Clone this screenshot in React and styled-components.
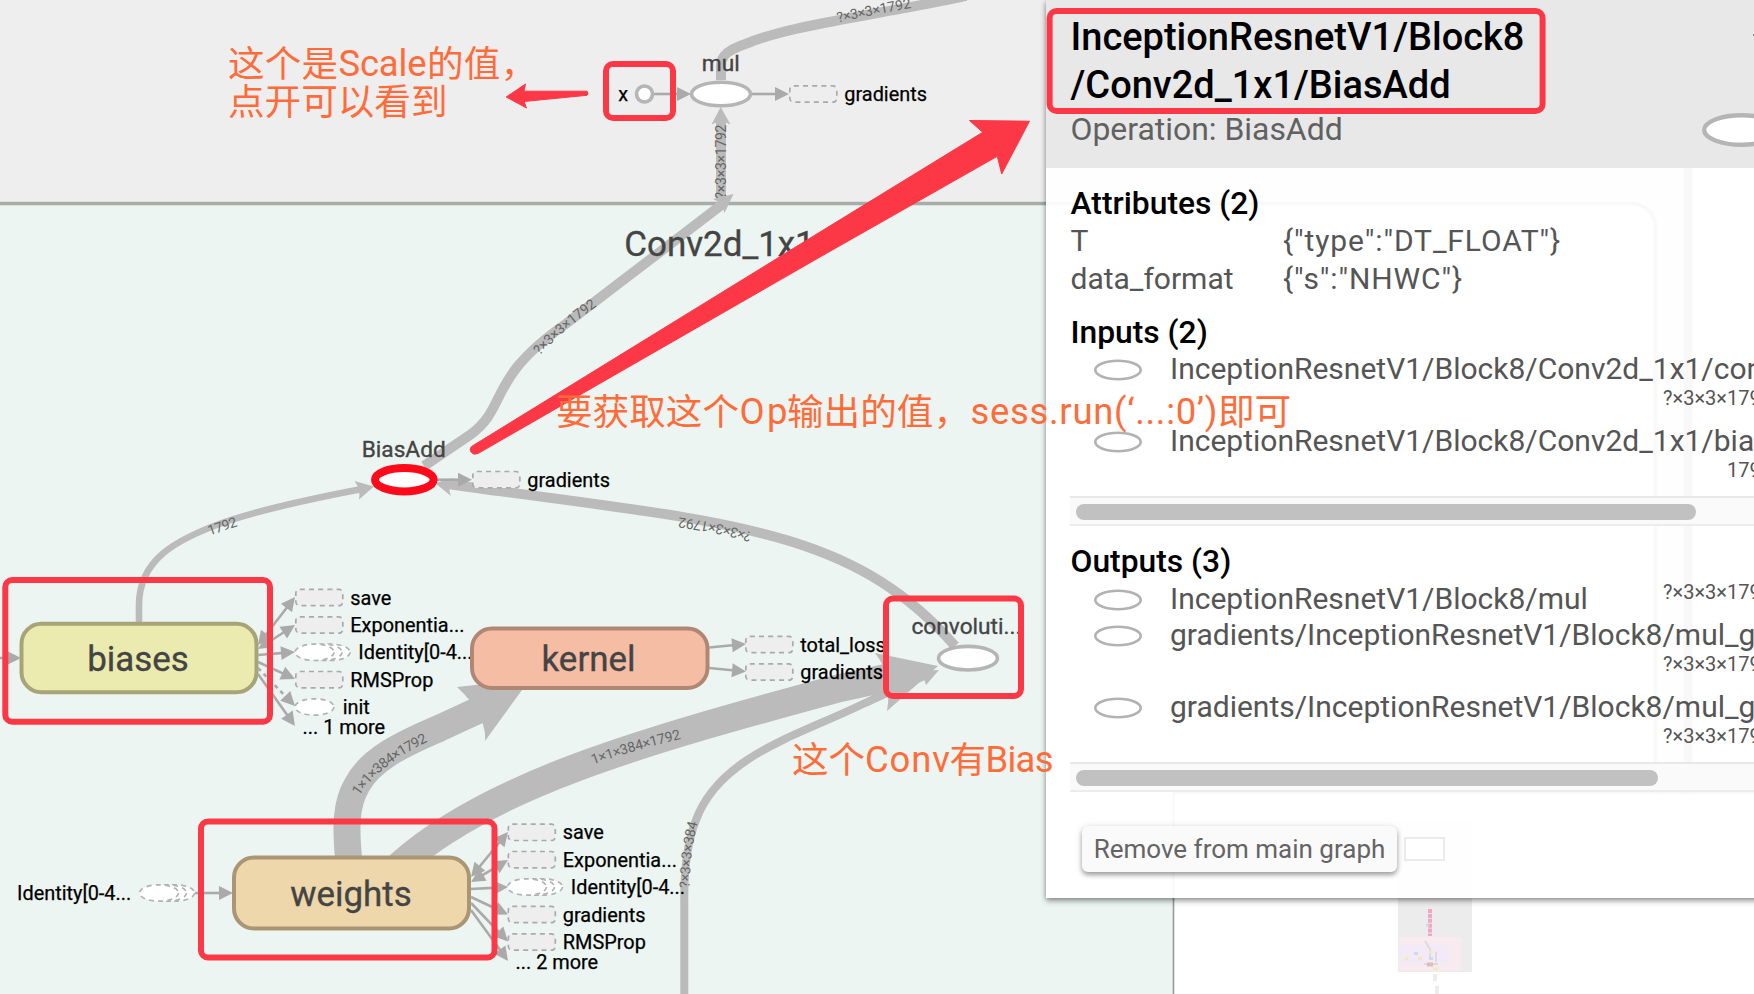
import React from "react";
import styled, { createGlobalStyle } from "styled-components";

const GlobalStyle = createGlobalStyle`
  html, body { margin: 0; padding: 0; overflow: hidden; background: #fff; }
  * { box-sizing: border-box; }
`;

const Page = styled.main`
  display: grid;
  grid-template-columns: 1754px;
  grid-template-rows: 994px;
  width: 1754px;
  height: 994px;
  overflow: hidden;
  font-family: Roboto, "Noto Sans CJK SC", sans-serif;
`;

const Canvas = styled.svg`
  grid-area: 1 / 1;
  display: block;
  width: 1754px;
  height: 994px;
  pointer-events: none;
`;

/* ---------- graph parts ---------- */

const Edge = styled.path`
  fill: none;
  stroke: #bbb;
  stroke-width: ${(p) => p.$w}px;
  stroke-linecap: ${(p) => p.$cap || "butt"};
`;
const EdgeHead = styled.path`
  fill: #bbb;
`;
const Wire = styled.line`
  stroke: #aaa;
  stroke-width: 2.6px;
  stroke-dasharray: ${(p) => (p.$dotted ? "4 4" : "none")};
`;
const WireHead = styled.path`
  fill: #aaa;
`;
const OpNode = styled.ellipse`
  fill: #fff;
  stroke: ${(p) => p.$color || "#b5b5b5"};
  stroke-width: ${(p) => p.$w || 3.6}px;
`;
const VariableNode = styled.rect`
  fill: ${(p) => p.$fill};
  stroke: ${(p) => p.$stroke};
  stroke-width: 4px;
`;
const DashedBox = styled.rect`
  fill: ${(p) => p.$fill || "#eee"};
  stroke: #aaa;
  stroke-width: 1.7px;
  stroke-dasharray: 5 4.2;
`;
const DashedOval = styled.ellipse`
  fill: #fff;
  stroke: #b2b2b2;
  stroke-width: 1.7px;
  stroke-dasharray: 5 4.2;
`;
const NodeLabel = styled.text`
  font-size: ${(p) => p.$size || 22.7}px;
  fill: #444;
  stroke: #444;
  stroke-width: 0.35px;
  text-anchor: middle;
`;
const SideLabel = styled.text`
  font-size: 19.9px;
  fill: #000;
  stroke: #000;
  stroke-width: 0.25px;
`;
const ShapeLabel = styled.text`
  font-size: 14px;
  fill: #666;
`;
const Frame = styled.rect`
  fill: none;
  stroke: #fd3846;
  stroke-width: 6px;
`;
const RedArrow = styled.path`
  fill: #fd3846;
  stroke: #fd3846;
  stroke-width: 1px;
  stroke-linejoin: round;
`;
const Note = styled.text`
  fill: #ff6c3a;
  font-family: ${(p) => (p.$cjk ? '"Noto Sans CJK SC"' : "Roboto")}, sans-serif;
  font-size: ${(p) => (p.$cjk ? 36.6 : 36.4)}px;
  font-weight: 400;
`;

function PathLabel({ id, d, length, children }) {
  return (
    <>
      <path id={id} d={d} fill="none" />
      <ShapeLabel>
        <textPath href={`#${id}`} textLength={length}>
          {children}
        </textPath>
      </ShapeLabel>
    </>
  );
}

function Arrow({ from, to, both, dotted }) {
  const [x1, y1] = from;
  const [x2, y2] = to;
  const angle = (Math.atan2(y2 - y1, x2 - x1) * 180) / Math.PI;
  const len = Math.hypot(x2 - x1, y2 - y1);
  const k = (len - 11) / len;
  const s = both ? 11 / len : 0;
  return (
    <g>
      <Wire
        $dotted={dotted}
        x1={x1 + (x2 - x1) * s}
        y1={y1 + (y2 - y1) * s}
        x2={x1 + (x2 - x1) * k}
        y2={y1 + (y2 - y1) * k}
      />
      <WireHead d="M0 0L-14 -7V7Z" transform={`translate(${x2} ${y2}) rotate(${angle})`} />
      {both && (
        <WireHead d="M0 0L-14 -7V7Z" transform={`translate(${x1} ${y1}) rotate(${angle + 180})`} />
      )}
    </g>
  );
}

function Stack({ x, y }) {
  return (
    <g>
      {[16, 8, 0].map((o) => (
        <DashedOval key={o} cx={x + 19.5 + o} cy={y} rx="19.5" ry="8.2" />
      ))}
    </g>
  );
}

function SideNode({ x, y, kind = "box", fill, label }) {
  const labelX = x + { box: 55.3, stack: 63.3, oval: 47.7 }[kind];
  return (
    <g>
      {kind === "box" && <DashedBox $fill={fill} x={x + 0.8} y={y - 8.2} width="47" height="16.4" rx="4" />}
      {kind === "stack" && <Stack x={x} y={y} />}
      {kind === "oval" && <DashedOval cx={x + 19.5} cy={y} rx="19.5" ry="8.2" />}
      <SideLabel x={labelX} y={y + 7}>{label}</SideLabel>
    </g>
  );
}

function Minimap() {
  return (
    <g>
      <rect x="1173.5" y="793" width="600" height="220" fill="#fff" stroke="#999" strokeWidth="1.6" />
      <rect x="1398" y="820" width="74" height="152" fill="#ececec" />
      <rect x="1399" y="937" width="62" height="34" fill="#f7ebf0" />
      <rect x="1400" y="945" width="49" height="19" fill="#f2eaf7" />
      <rect x="1405" y="838" width="39" height="22" fill="#fff" stroke="#000" strokeWidth="2" />
      <path d="M1430 909V936" stroke="#f3a6c4" strokeWidth="4" strokeDasharray="4 .9" />
      <path d="M1430 898v10M1435 974v7M1437 986v8" stroke="#ececec" strokeWidth="4" />
      <path d="M1425 941l5 8v11M1436 952v10M1424 964h14" stroke="#dedadb" strokeWidth="2" fill="none" />
      <path d="M1404.5 958.5h4M1418 958.5h4M1429 952h4M1433 969h5" stroke="#f3e8c2" strokeWidth="3" />
      <path d="M1414 953.5h4M1429 958.5h4M1426 925h3" stroke="#d0d9ec" strokeWidth="3" />
      <path d="M1427 964.5h6" stroke="#dfbcb4" strokeWidth="4" />
    </g>
  );
}

function Graph() {
  return (
    <Canvas viewBox="0 0 1754 994">
      <rect width="1754" height="994" fill="#eee" />
      <path d="M1688 0V994" stroke="#a9a9a9" strokeWidth="9" />
      <rect x="1693" width="61" height="994" fill="#f7f7f7" />
      <rect x="-40" y="203.5" width="1695.5" height="900" rx="24" fill="#ecf5f1" stroke="#a7ada9" strokeWidth="3.6" />
      <Minimap />

      <Edge $w={10} d="M721 80V66C721 55 728 50 748 43C780 30 830 22 880 12.5C910 7 940 2 966 -4" />
      <Edge $w={10} d="M721 199V120" />
      <EdgeHead d="M720.7 107L730.5 124.5Q721 119 711.5 124.5Z" />
      <Edge $w={10} d="M424 466L470 435C510 405 485 380 567 323L724 203" />
      <EdgeHead d="M733.5 194L724.5 213Q723 203 713 199Z" />
      <Edge $w={6.6} d="M139 622V605C139 560 175 540 222 523C262 509 320 497 362 489" />
      <EdgeHead d="M374 486.5L359 499.5Q361 490 354.5 481Z" />
      <Edge $w={10} d="M955 646C850 525 720 522 447 484" />
      <EdgeHead d="M435 483L451 496Q447 487 453 478Z" />
      <Edge $w={8} d="M684.3 994V900C684 860 690 835 696 820C720 755 800 735 865 703L926 675" />
      <EdgeHead d="M939 670L926 685Q924 676 915 671Z" />
      <Edge $w={27} d="M348.5 858C346 830 345 805 357 785C370 760 400 745 440 728L482 708.5" />
      <EdgeHead d="M530 679L485 741Q487 715 457 687Z" />
      <Edge $w={28} $cap="round" d="M401 864C490 785 640 742 840 688L895 676" />
      <EdgeHead d="M938 666L887 711Q893 675 875 653Z" />

      <PathLabel id="shape-out" length={75} d="M838 22.5Q875 14 914 7.5">?×3×3×1792</PathLabel>
      <PathLabel id="shape-mul" length={74} d="M726 198.5V122">?×3×3×1792</PathLabel>
      <PathLabel id="shape-bias" length={76} d="M539.5 355.5Q563 330 597 306">?×3×3×1792</PathLabel>
      <PathLabel id="shape-conv" length={75} d="M752 532.5Q717 522 675 517">?×3×3×1792</PathLabel>
      <PathLabel id="shape-biases" length={30} d="M209.5 535.5L241 525">1792</PathLabel>
      <PathLabel id="shape-kernel" length={89} d="M359 796Q381 763 431 740">1×1×384×1792</PathLabel>
      <PathLabel id="shape-weights" length={92} d="M593 764.5Q637 749 685 738">1×1×384×1792</PathLabel>
      <PathLabel id="shape-input" length={66} d="M689.5 888Q690 850 699 818">?×3×3×384</PathLabel>

      <Arrow from={[653, 94]} to={[691, 94]} />
      <OpNode cx="644.5" cy="94" rx="8" ry="8" />
      <Arrow from={[752, 94]} to={[789, 94]} />
      <OpNode cx="721" cy="94" rx="29.5" ry="11.8" />
      <SideNode x={789} y={94} fill="none" label="gradients" />
      <SideLabel x="618.3" y="101">x</SideLabel>
      <NodeLabel x="720.7" y="70.7">mul</NodeLabel>

      <NodeLabel $size={34.9} x="719.5" y="255.7">Conv2d_1x1</NodeLabel>

      <Arrow from={[437, 479.7]} to={[472, 479.7]} />
      <OpNode $color="#ff0a1a" $w={8} cx="404.3" cy="479.7" rx="29.3" ry="11.7" />
      <NodeLabel x="403.7" y="456.5">BiasAdd</NodeLabel>
      <SideNode x={472} y={479.7} label="gradients" />

      <Arrow from={[-6, 658]} to={[21, 658]} />
      <VariableNode $fill="#ebeaaf" $stroke="#a7a477" x="21.5" y="623.7" width="235" height="68.6" rx="20" />
      <NodeLabel $size={34.9} x="138" y="670.7">biases</NodeLabel>
      <Arrow from={[258, 645]} to={[295, 597]} both />
      <Arrow from={[258, 649]} to={[295, 625]} both />
      <Arrow from={[258, 655]} to={[295, 652]} />
      <Arrow from={[258, 662]} to={[295, 679]} />
      <Arrow from={[258, 668]} to={[295, 706]} dotted />
      <Arrow from={[258, 674]} to={[295, 726]} />
      <SideNode x={295} y={597.5} label="save" />
      <SideNode x={295} y={625} label="Exponentia..." />
      <SideNode x={295} y={652.3} kind="stack" label="Identity[0-4..." />
      <SideNode x={295} y={679.7} label="RMSProp" />
      <SideNode x={295} y={707} kind="oval" label="init" />
      <SideLabel x="302.5" y="733.5">... 1 more</SideLabel>

      <VariableNode $fill="#f5bda4" $stroke="#b08774" x="472" y="628.5" width="235.5" height="59.5" rx="20" />
      <NodeLabel $size={34.9} x="588.5" y="670.7">kernel</NodeLabel>
      <Arrow from={[709, 647.5]} to={[746, 644]} />
      <Arrow from={[709, 668]} to={[746, 671.5]} />
      <SideNode x={745} y={644.5} label="total_loss" />
      <SideNode x={745} y={672} label="gradients" />

      <OpNode cx="968" cy="658.2" rx="29.5" ry="11.8" />
      <NodeLabel x="966.5" y="634.3">convoluti...</NodeLabel>

      <SideLabel x="17" y="900">Identity[0-4...</SideLabel>
      <Stack x={139.5} y={893} />
      <Arrow from={[195, 893]} to={[233, 893]} />
      <VariableNode $fill="#eed7ab" $stroke="#aa9675" x="234" y="857.5" width="235" height="71" rx="20" />
      <NodeLabel $size={34.9} x="351" y="905.7">weights</NodeLabel>
      <Arrow from={[471, 877]} to={[508, 832]} both />
      <Arrow from={[471, 882]} to={[508, 860]} both />
      <Arrow from={[471, 889]} to={[508, 887]} />
      <Arrow from={[471, 897]} to={[508, 914.5]} />
      <Arrow from={[471, 903]} to={[508, 941.5]} />
      <Arrow from={[471, 910]} to={[508, 961]} />
      <SideNode x={507.5} y={832.3} label="save" />
      <SideNode x={507.5} y={859.7} label="Exponentia..." />
      <SideNode x={507.5} y={887} kind="stack" label="Identity[0-4..." />
      <SideNode x={507.5} y={914.5} label="gradients" />
      <SideNode x={507.5} y={942} label="RMSProp" />
      <SideLabel x="515.5" y="968.5">... 2 more</SideLabel>
    </Canvas>
  );
}

/* ---------- info panel ---------- */

const Panel = styled.aside`
  grid-area: 1 / 1;
  justify-self: start;
  align-self: start;
  margin-left: 1046px;
  width: 750px;
  height: 898px;
  display: flex;
  flex-direction: column;
  background: rgba(255, 255, 255, 0.92);
  box-shadow: 0 3px 6px rgba(0, 0, 0, 0.34), 0 1px 4px rgba(0, 0, 0, 0.2);
`;
const PanelHeader = styled.header`
  height: 168px;
  padding: 13px 0 0 24.5px;
  background: #e8e8e8;
  display: grid;
  grid-template-columns: 631px 80px;
  grid-template-rows: 96px 42px;
`;
const Title = styled.h1`
  margin: 0;
  font-size: 38px;
  font-weight: 500;
  line-height: 48px;
  color: #000;
`;
const Subtitle = styled.div`
  font-size: 31.9px;
  line-height: 41px;
  color: #616161;
`;
const HeaderIcon = styled.svg`
  width: 80px;
  height: 34px;
  margin-top: 4px;
  display: block;
`;
const CollapseIcon = styled.svg`
  width: 24px;
  height: 14px;
  margin: 18px 0 0 50px;
  display: block;
`;
const PanelBody = styled.div`
  padding: 17px 0 0 24.5px;
  display: flex;
  flex-direction: column;
`;
const SectionTitle = styled.h2`
  margin: ${(p) => p.$top || 0}px 0 0;
  font-size: 31.8px;
  font-weight: 500;
  line-height: 37px;
  color: #000;
`;
const AttributeRow = styled.div`
  display: grid;
  grid-template-columns: 212.5px 1fr;
  font-size: 30px;
  line-height: 37.5px;
  color: #555;
`;
const AttributeValue = styled.span`
  letter-spacing: 0.9px;
`;
const OpList = styled.div`
  height: ${(p) => p.$height}px;
  padding-top: ${(p) => p.$top}px;
`;
const OpRow = styled.div`
  display: grid;
  grid-template-columns: 99.5px 602px;
`;
const OpIcon = styled.svg`
  width: 50px;
  height: 24px;
  margin: 6.5px 0 0 22.3px;
  display: block;
`;
const OpText = styled.div`
  display: flex;
  flex-wrap: wrap;
  justify-content: space-between;
  align-items: flex-start;
  color: #555;
`;
const OpName = styled.span`
  font-size: 30px;
  line-height: 36px;
  white-space: nowrap;
`;
const OpShape = styled.span`
  margin-left: auto;
  min-height: 36px;
  font-size: 20px;
  line-height: 23px;
`;
const ScrollTrack = styled.div`
  height: 30px;
  margin-left: -1px;
  padding: 6px 0 0 6px;
  background: #fafafa;
  border-top: 2px solid #e8e8e8;
  border-bottom: 2px solid #ececec;
`;
const ScrollThumb = styled.div`
  width: ${(p) => p.$width}px;
  height: 16px;
  border-radius: 8px;
  background: #c1c1c1;
`;
const RemoveButton = styled.button`
  align-self: flex-start;
  margin: 34px 0 0 11.5px;
  width: 315px;
  height: 46px;
  padding: 0;
  border: 0;
  border-radius: 6px;
  background: #fafafa;
  box-shadow: 0 3px 5px rgba(0, 0, 0, 0.36), 0 0 8px rgba(0, 0, 0, 0.08);
  font: 400 26px/46px Roboto, sans-serif;
  color: #646464;
`;

function Op({ name, shape }) {
  return (
    <OpRow>
      <OpIcon viewBox="0 0 50 24">
        <ellipse cx="25" cy="12" rx="22.7" ry="9.2" fill="#fff" stroke="#b2b2b2" strokeWidth="2.6" />
      </OpIcon>
      <OpText>
        <OpName>{name}</OpName>
        <OpShape>{shape}</OpShape>
      </OpText>
    </OpRow>
  );
}

function InfoPanel() {
  return (
    <Panel>
      <PanelHeader>
        <Title>
          InceptionResnetV1/Block8
          <br />
          /Conv2d_1x1/BiasAdd
        </Title>
        <CollapseIcon viewBox="0 0 24 14">
          <path d="M2 3l10 9L22 3" fill="none" stroke="#222" strokeWidth="3" />
        </CollapseIcon>
        <Subtitle>Operation: BiasAdd</Subtitle>
        <HeaderIcon viewBox="0 0 80 34">
          <ellipse cx="40" cy="17" rx="37.8" ry="14.8" fill="#fff" stroke="#b5b5b5" strokeWidth="4.4" />
        </HeaderIcon>
      </PanelHeader>
      <PanelBody>
        <SectionTitle>Attributes (2)</SectionTitle>
        <AttributeRow>
          <span>T</span>
          <AttributeValue>{'{"type":"DT_FLOAT"}'}</AttributeValue>
        </AttributeRow>
        <AttributeRow>
          <span>data_format</span>
          <AttributeValue>{'{"s":"NHWC"}'}</AttributeValue>
        </AttributeRow>
        <SectionTitle $top={17}>Inputs (2)</SectionTitle>
        <OpList $height={145} $top={0}>
          <Op name="InceptionResnetV1/Block8/Conv2d_1x1/convolution" shape="?×3×3×1792" />
          <Op name="InceptionResnetV1/Block8/Conv2d_1x1/biases/read" shape="1792" />
        </OpList>
        <ScrollTrack>
          <ScrollThumb $width={620} />
        </ScrollTrack>
        <SectionTitle $top={17}>Outputs (3)</SectionTitle>
        <OpList $height={182} $top={1}>
          <Op name="InceptionResnetV1/Block8/mul" shape="?×3×3×1792" />
          <Op name="gradients/InceptionResnetV1/Block8/mul_grad/Shape" shape="?×3×3×1792" />
          <Op name="gradients/InceptionResnetV1/Block8/mul_grad/mul_1" shape="?×3×3×1792" />
        </OpList>
        <ScrollTrack>
          <ScrollThumb $width={582} />
        </ScrollTrack>
        <RemoveButton>Remove from main graph</RemoveButton>
      </PanelBody>
    </Panel>
  );
}

/* ---------- hand-drawn notes ---------- */

const notes = [
  { x: 228, y: 76.5, w: 110, cjk: true, t: "这个是" },
  { x: 338.5, y: 76, w: 88, t: "Scale" },
  { x: 427, y: 76.5, w: 110, cjk: true, t: "的值，" },
  { x: 228, y: 114.5, w: 219.5, cjk: true, t: "点开可以看到" },
  { x: 556, y: 424.5, w: 183, cjk: true, t: "要获取这个" },
  { x: 739.5, y: 424, w: 48, t: "Op" },
  { x: 787, y: 424.5, w: 183, cjk: true, t: "输出的值，" },
  { x: 970.5, y: 424, w: 247, t: "sess.run(‘...:0’)" },
  { x: 1218, y: 424.5, w: 73, cjk: true, t: "即可" },
  { x: 792, y: 772.5, w: 73, cjk: true, t: "这个" },
  { x: 865, y: 772, w: 85, t: "Conv" },
  { x: 949.5, y: 772.5, w: 36.6, cjk: true, t: "有" },
  { x: 985.5, y: 772, w: 68, t: "Bias" },
];

function Annotations() {
  return (
    <Canvas viewBox="0 0 1754 994">
      <Frame x="606" y="64" width="67" height="54" rx="7" />
      <Frame x="1049.6" y="11" width="493" height="100" rx="7" />
      <Frame x="5.3" y="580" width="264.7" height="141.7" rx="7" />
      <Frame x="201" y="821.5" width="293.5" height="136" rx="7" />
      <Frame x="886" y="598.5" width="135" height="97.5" rx="7" />
      <RedArrow d="M1029.500 121.200L969.500 120.500L982.700 132.300L820 232L471.500 446.500Q469 449 471 452Q473.500 455.500 478 453.500L820 257L997.300 156.300L1001.700 174Z" />
      <RedArrow d="M506.200 97L525.500 84L524 91.200L587 91.200Q589 93.300 587 95.300L524 101.500L526.500 108Z" />
      {notes.map((n) => (
        <Note key={`${n.x}-${n.y}`} $cjk={n.cjk} x={n.x} y={n.y} textLength={n.w}>
          {n.t}
        </Note>
      ))}
    </Canvas>
  );
}

export default function App() {
  return (
    <>
      <GlobalStyle />
      <Page>
        <Graph />
        <InfoPanel />
        <Annotations />
      </Page>
    </>
  );
}
